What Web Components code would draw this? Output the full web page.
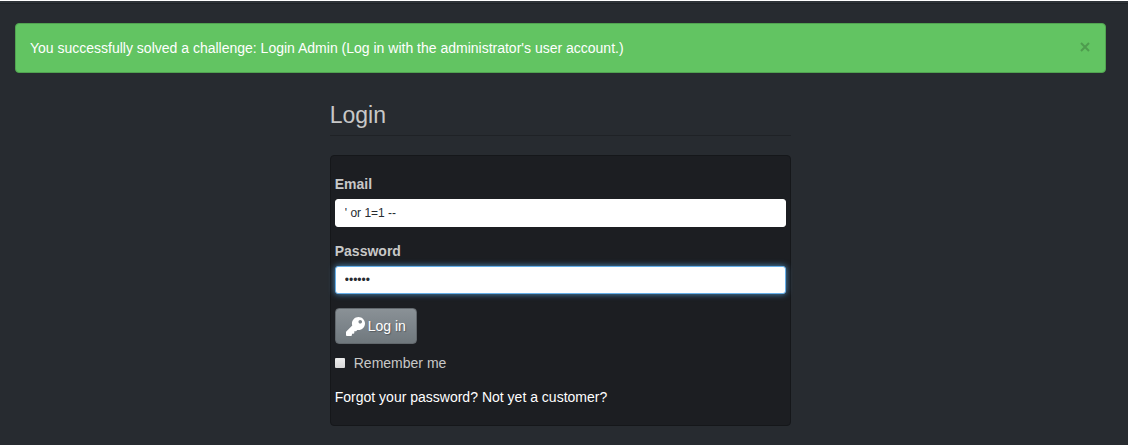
<!DOCTYPE html>
<html lang="en">
<head>
<meta charset="utf-8">
<title>Login</title>
<style>
html { background: #272b30; }
body { margin: 0; font: 14px/20px "Liberation Sans", Arial, sans-serif; color: #c8c8c8; }
</style>
</head>
<body>
<shop-page>
  <success-alert slot="notice">You successfully solved a challenge: Login Admin (Log in with the administrator's user account.)</success-alert>
  <login-panel></login-panel>
</shop-page>
<script>
const define = (name, html, setup) => customElements.define(name, class extends HTMLElement {
  constructor() {
    super();
    const root = this.attachShadow({ mode: "open" });
    const t = document.createElement("template");
    t.innerHTML = html;
    root.append(t.content.cloneNode(true));
    if (setup) setup(this, root);
  }
});

define("shop-page", `
<style>
:host { display: block; box-sizing: border-box; min-height: 100vh; border-top: 1px solid #fff; border-right: 2px solid #fff; padding: 0 22px 19px 15px; }
.edge { height: 2px; margin: 0 -22px 19px -15px; background: #2e3338; border-bottom: 1px solid #1f2327; }
main { width: 42.3%; min-width: 280px; margin: 28px auto 0; }
</style>
<div class="edge"></div>
<slot name="notice"></slot>
<main><slot></slot></main>`);

define("success-alert", `
<style>
:host { display: flex; justify-content: space-between; background: #62c462; color: #fff; border: 1px solid #51a351; border-radius: 4px; padding: 14px; }
button { border: 0; padding: 0; background: none; width: 12px; height: 18px; color: #4e9c4e; display: flex; align-items: center; justify-content: center; }
svg { flex: none; width: 10px; height: 10px; }
</style>
<span role="alert"><slot></slot></span>
<button type="button" aria-label="Close"><svg viewBox="0 0 10 10"><path d="M1 1 9 9M9 1 1 9" fill="none" stroke="currentColor" stroke-width="2"/></svg></button>`);

define("text-field", `
<style>
:host { display: block; margin-bottom: 14px; }
label { display: block; font-weight: bold; margin-bottom: 5px; }
input { display: block; box-sizing: border-box; width: 100%; height: 28px; padding: 4px 9px; border: 1px solid #fff; border-radius: 3px; background: #fff; color: #272b30; font: 12px/18px "Liberation Sans", Arial, sans-serif; outline: 0; }
:host([active]) input { border-color: #66afe9; box-shadow: 0 0 6px #4f91c5; }
</style>
<label for="field"></label>
<input id="field">`, (host, root) => {
  root.querySelector("label").textContent = host.getAttribute("label");
  const input = root.querySelector("input");
  input.type = host.getAttribute("type");
  input.value = host.getAttribute("value");
});

define("login-button", `
<style>
:host { display: block; }
button { display: flex; align-items: center; gap: 3px; height: 36px; padding: 0 10px; border: 1px solid #62686d; border-radius: 4px; background: linear-gradient(#8a9196, #7a8288 60%, #70787d); color: #fff; font: 14px/20px "Liberation Sans", Arial, sans-serif; text-shadow: 1px 1px 1px rgba(0,0,0,.3); }
svg { width: 19px; height: 19px; }
</style>
<button type="submit"><svg viewBox="0 0 512 512" aria-hidden="true"><path fill="#fff" d="M512 176c0 97-79 176-176 176-11 0-22-1-33-3l-24 27c-5 5-11 8-18 8h-37v40c0 13-11 24-24 24h-40v40c0 13-11 24-24 24H24c-13 0-24-11-24-24v-78c0-6 3-12 7-17l162-162c-6-17-9-36-9-55C160 79 239 0 336 0s176 79 176 176zM336 128c0 27 21 48 48 48s48-21 48-48-21-48-48-48-48 21-48 48z"/></svg><slot></slot></button>`);

define("check-option", `
<style>
:host { display: block; }
label { display: flex; align-items: center; gap: 9px; }
input { appearance: none; width: 10px; height: 10px; margin: 0; background: linear-gradient(#eee, #d8d8d8); border-radius: 1px; }
input:checked { background: #428bca; }
</style>
<label><input type="checkbox"><slot></slot></label>`);

define("login-panel", `
<style>
:host { display: block; }
h1 { margin: 0 0 19px; padding-bottom: 6px; border-bottom: 1px solid #1f2226; font-size: 23px; line-height: 28px; font-weight: normal; }
form { box-sizing: border-box; background: #1c1e22; border: 1px solid #15171a; border-radius: 4px; padding: 18px 4px; }
check-option { margin: 9px 0 14px; }
nav { display: flex; gap: 4px; }
a { color: #fff; text-decoration: none; }
</style>
<h1>Login</h1>
<form>
  <text-field label="Email" type="text" value="' or 1=1 --"></text-field>
  <text-field label="Password" type="password" value="123456" active></text-field>
  <login-button>Log in</login-button>
  <check-option>Remember me</check-option>
  <nav><a href="#forgot">Forgot your password?</a><a href="#register">Not yet a customer?</a></nav>
</form>`);
</script>
</body>
</html>
